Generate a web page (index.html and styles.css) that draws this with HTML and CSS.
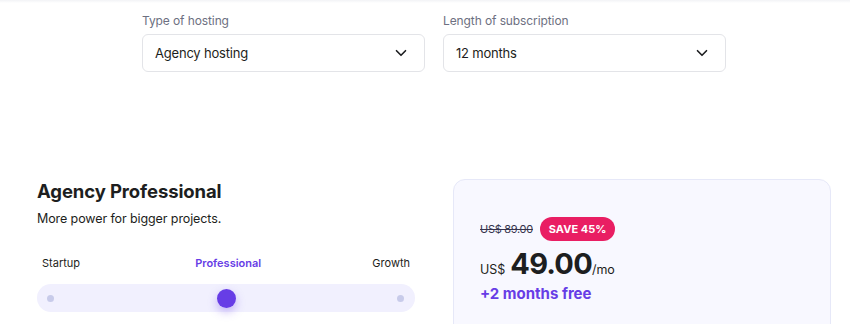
FILE: index.html
```html
<!DOCTYPE html>
<html lang="en">
<head>
    <meta charset="UTF-8">
    <title>Agency hosting plans</title>
    <link rel="stylesheet" href="styles.css">
</head>
<body>
    <div class="topbar"></div>

    <div class="filters">
        <div class="field">
            <label>Type of hosting</label>
            <div class="select">
                <span>Agency hosting</span>
                <svg width="18" height="18" viewBox="0 0 24 24"><path d="M6 9l6 6 6-6" fill="none" stroke="#1d1e20" stroke-width="2.2" stroke-linecap="round" stroke-linejoin="round"/></svg>
            </div>
        </div>
        <div class="field">
            <label>Length of subscription</label>
            <div class="select">
                <span>12 months</span>
                <svg width="18" height="18" viewBox="0 0 24 24"><path d="M6 9l6 6 6-6" fill="none" stroke="#1d1e20" stroke-width="2.2" stroke-linecap="round" stroke-linejoin="round"/></svg>
            </div>
        </div>
    </div>

    <div class="plan">
        <div class="plan-info">
            <h2>Agency Professional</h2>
            <p class="desc">More power for bigger projects.</p>

            <div class="tiers">
                <span>Startup</span>
                <span class="active">Professional</span>
                <span>Growth</span>
            </div>
            <div class="track">
                <span class="dot"></span>
                <span class="thumb"></span>
                <span class="dot"></span>
            </div>
        </div>

        <div class="price-card">
            <div class="old-row">
                <s class="old">US$ 89.00</s>
                <span class="badge">SAVE 45%</span>
            </div>
            <div class="price">
                <span class="cur">US$</span>
                <span class="amount">49.00</span>
                <span class="per">/mo</span>
            </div>
            <div class="bonus">+2 months free</div>
        </div>
    </div>
</body>
</html>
```

FILE: styles.css
```css
* {
    box-sizing: border-box;
    margin: 0;
    padding: 0;
    font-family: 'Inter', 'Noto Sans', sans-serif;
}

html, body {
    height: 324px;
    overflow: hidden;
}

body {
    background: #fff;
    color: #1d1e20;
}

.topbar {
    height: 3px;
    background: linear-gradient(#f2f3f6, #fff);
}

.filters {
    display: flex;
    gap: 18px;
    padding: 10px 0 0 142px;
}

.field {
    width: 283px;
}

label {
    display: block;
    font-size: 12px;
    letter-spacing: -0.1px;
    color: #6d7081;
    margin-bottom: 5px;
    line-height: 16px;
}

.select {
    height: 38px;
    border: 1px solid #e3e4e8;
    border-radius: 6px;
    display: flex;
    align-items: center;
    justify-content: space-between;
    padding: 0 14px 0 12px;
    font-size: 13px;
    letter-spacing: -0.2px;
    color: #1d1e20;
}

.plan {
    display: flex;
    gap: 38px;
    padding: 107px 0 0 37px;
}

.plan-info {
    width: 378px;
}

h2 {
    font-size: 18.5px;
    font-weight: 700;
    line-height: 24px;
    letter-spacing: -0.1px;
}

.desc {
    font-size: 12.5px;
    letter-spacing: -0.1px;
    color: #1d1e20;
    margin-top: 6px;
    line-height: 20px;
}

.tiers {
    display: flex;
    justify-content: space-between;
    font-size: 11px;
    padding: 0 5px;
    margin-top: 26px;
    line-height: 16px;
}

.tiers .active {
    color: #673de6;
    font-weight: 600;
    margin-left: 4px;
}

.track {
    margin-top: 13px;
    height: 28px;
    border-radius: 14px;
    background: #f1f0fe;
    display: flex;
    align-items: center;
    justify-content: space-between;
    padding: 0 11px 0 10px;
}

.dot {
    width: 7px;
    height: 7px;
    border-radius: 50%;
    background: #c8cbea;
}

.thumb {
    width: 19px;
    height: 19px;
    border-radius: 50%;
    background: #673de6;
    box-shadow: 0 4px 10px rgba(103, 61, 230, 0.35);
    margin-left: 2px;
}

.price-card {
    width: 378px;
    height: 160px;
    background: #f8f8ff;
    border: 1px solid #e6e8f8;
    border-radius: 12px;
    padding: 37px 26px;
}

.old-row {
    display: flex;
    align-items: center;
    gap: 7px;
}

.old {
    font-size: 11px;
    letter-spacing: -0.3px;
    color: #36344d;
}

.badge {
    background: #e91e63;
    color: #fff;
    font-size: 11px;
    font-weight: 700;
    border-radius: 13px;
    padding: 4px 9px;
    line-height: 16px;
}

.price {
    display: flex;
    align-items: baseline;
    margin-top: 4px;
}

.cur {
    font-size: 12.5px;
    margin-right: 5px;
}

.amount {
    font-size: 29px;
    font-weight: 700;
    letter-spacing: -0.8px;
    line-height: 38px;
}

.per {
    font-size: 12.5px;
}

.bonus {
    color: #673de6;
    font-size: 15px;
    font-weight: 700;
    line-height: 20px;
    margin-top: 1px;
}
```
